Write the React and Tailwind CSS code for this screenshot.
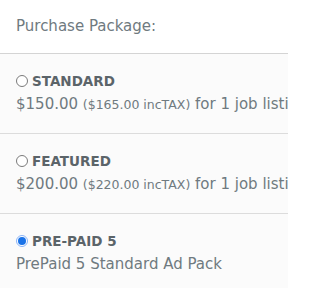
const packages = [
  { id: "standard", name: "STANDARD", price: "$150.00", tax: "($165.00 incTAX)", rest: "for 1 job listing" },
  { id: "featured", name: "FEATURED", price: "$200.00", tax: "($220.00 incTAX)", rest: "for 1 job listing" },
  { id: "prepaid5", name: "PRE-PAID 5", desc: "PrePaid 5 Standard Ad Pack" },
];

const Radio = ({ checked }) =>
  checked ? (
    <span className="w-[12px] h-[12px] rounded-full border border-[#8ab4f8] bg-white flex items-center justify-center shrink-0">
      <span className="w-[8px] h-[8px] rounded-full bg-[#1a73e8]" />
    </span>
  ) : (
    <span className="w-[12px] h-[12px] rounded-full border border-[#7a7a7a] bg-white shrink-0" />
  );

export default function App() {
  const selected = "prepaid5";
  return (
    <div className="w-[288px] h-[288px] overflow-hidden bg-white text-[#6f7a80] font-['DejaVu_Sans',sans-serif]">
      <div className="h-[54px] px-4 flex items-center text-[15px] border-b border-[#d4d4d4]">
        Purchase Package:
      </div>
      {packages.map((p) => (
        <div key={p.id} className="h-[80px] px-4 pt-[19px] bg-[#fbfbfb] border-b border-[#dcdcdc] whitespace-nowrap">
          <div className="flex items-center gap-[4px] h-[16px]">
            <Radio checked={p.id === selected} />
            <span className="text-[13.5px] font-bold text-[#5b6469]">{p.name}</span>
          </div>
          <div className="mt-[5px] text-[15px] leading-[20px]">
            {p.desc ? (
              p.desc
            ) : (
              <>
                {p.price} <span className="text-[12.5px]">{p.tax}</span> {p.rest}
              </>
            )}
          </div>
        </div>
      ))}
    </div>
  );
}
